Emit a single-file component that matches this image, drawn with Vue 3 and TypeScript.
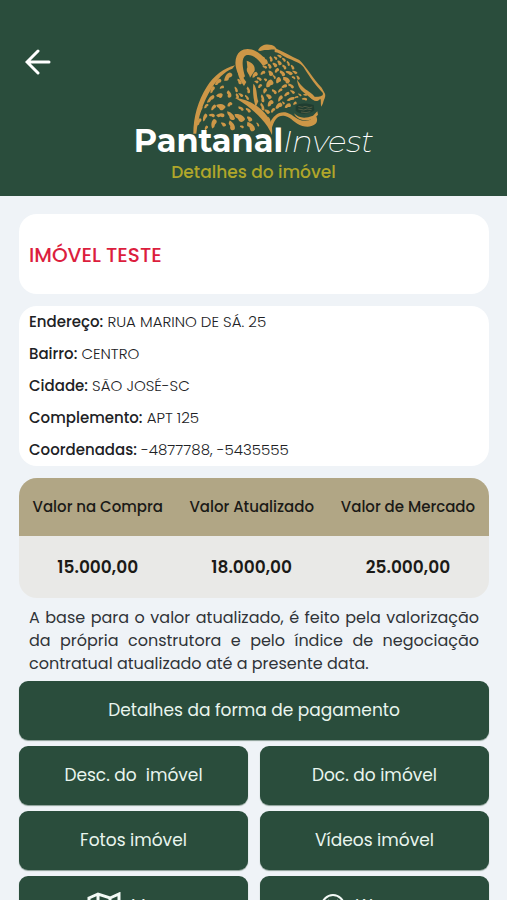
<script setup lang="ts">
interface Entry {
  label: string
  value: string
}

const fields: Entry[] = [
  { label: 'Endereço', value: 'RUA MARINO DE SÁ. 25' },
  { label: 'Bairro', value: 'CENTRO' },
  { label: 'Cidade', value: 'SÃO JOSÉ-SC' },
  { label: 'Complemento', value: 'APT 125' },
  { label: 'Coordenadas', value: '-4877788, -5435555' },
]

const prices: Entry[] = [
  { label: 'Valor na Compra', value: '15.000,00' },
  { label: 'Valor Atualizado', value: '18.000,00' },
  { label: 'Valor de Mercado', value: '25.000,00' },
]

const actions: string[] = ['Desc. do\u00a0 imóvel', 'Doc. do imóvel', 'Fotos imóvel', 'Vídeos imóvel']

// Coat markings: x, y, half length, half width, rotation
const spots: number[][] = [
  [148, 124, 15, 9, -62], [117, 139, 12, 6, -48], [128, 154, 7, 4, -20], [149, 174, 11, 7, 62],
  [100, 162, 11, 5, -62], [121, 178, 9, 7, 18], [95, 190, 15, 6, -52], [76, 180, 8, 4, -65],
  [125, 211, 13, 9, 38], [152, 206, 8, 6, -50], [103, 215, 10, 5, -48], [82, 211, 8, 5, -65],
  [65, 221, 9, 4, -70], [155, 238, 16, 7, 58], [124, 239, 12, 7, -12], [98, 238, 9, 5, 10],
  [77, 245, 12, 5, -62], [60, 259, 12, 5, -68], [104, 264, 14, 7, -70], [133, 264, 8, 5, 50],
  [157, 268, 15, 8, 62], [181, 244, 17, 9, 38], [185, 218, 9, 5, 20], [207, 222, 9, 5, 38],
  [211, 248, 9, 6, 55], [214, 272, 16, 9, 42], [188, 272, 6, 4, 20], [81, 276, 7, 4, -50],
  [174, 180, 8, 5, 65], [171, 160, 9, 4, 70], [185, 176, 8, 4, 45], [203, 184, 9, 4, 50],
  [181, 136, 9, 5, 62], [207, 162, 10, 5, 65], [236, 265, 7, 3, 60],
  [227, 117, 10, 6, -40], [240, 129, 8, 5, 20], [251, 111, 8, 5, -35], [232, 137, 6, 4, 25],
  [243, 151, 7, 5, -60], [271, 144, 13, 9, -45], [257, 165, 8, 5, -55], [250, 187, 12, 5, 75],
  [269, 181, 9, 6, 45], [249, 212, 12, 5, 62], [274, 203, 11, 7, -55], [264, 226, 9, 5, 40],
  [282, 224, 8, 5, -60], [299, 210, 12, 7, -40], [303, 188, 10, 5, -48], [285, 167, 9, 5, 35],
  [303, 164, 8, 4, -38], [297, 133, 9, 7, -38], [321, 132, 12, 8, 35], [315, 151, 9, 5, -18],
  [335, 150, 10, 5, 25], [323, 175, 9, 5, -40], [340, 167, 8, 4, 38], [335, 190, 12, 5, -25],
  [326, 210, 10, 6, -28], [347, 202, 6, 4, -30], [309, 112, 10, 6, 38], [293, 104, 8, 5, -45],
  [275, 111, 9, 6, 70], [271, 90, 8, 5, 55], [287, 86, 8, 5, 48], [275, 69, 8, 5, 60],
  [289, 66, 6, 4, 38], [301, 80, 8, 5, 60], [315, 93, 8, 5, 40], [257, 93, 7, 4, 20],
  [330, 110, 11, 5, 30], [327, 82, 8, 4, 58], [340, 93, 8, 4, 60], [347, 108, 8, 4, 40],
  [314, 71, 7, 4, 40], [301, 60, 7, 4, 32], [261, 76, 7, 4, 60], [252, 66, 6, 4, 35],
  [357, 124, 7, 4, 65], [343, 125, 6, 4, 20], [362, 176, 6, 3, 35], [378, 176, 6, 3, 12],
  [352, 184, 6, 3, -22], [376, 189, 8, 4, 10], [313, 200, 5, 3, 60],
  [270, 250, 8, 3, 70], [259, 131, 5, 4, 40], [285, 123, 6, 4, 40],
]

// Uneven teardrop outline; the index varies its waist and tip
function blotch([x, y, a, b, r]: number[], i: number): { d: string; transform: string } {
  const k = ((i * 37) % 11) / 11
  const tip = Math.round(b * (k - 0.5) * 14) / 10
  const waist = Math.round(b * (0.3 + k * 0.6) * 10) / 10
  const h = Math.round(a * 5) / 10
  return {
    d: `M${-a} ${tip}C${-h} ${-b} ${h} ${-b * 1.4} ${a} ${-waist}C${a + 2} ${b} ${h} ${b * 1.3} 0 ${waist}C${-h} ${waist} ${-h} ${b} ${-a} ${tip}Z`,
    transform: `translate(${x} ${y}) rotate(${r})`,
  }
}
const coat = spots.map(blotch)
</script>

<template>
  <div class="page">
    <header class="header">
      <button class="back" type="button" aria-label="Voltar">
        <svg viewBox="0 0 26 26" aria-hidden="true">
          <path d="M24 13H3M13 2 2 13l11 11" />
        </svg>
      </button>
      <div class="brand">
        <svg class="jaguar" viewBox="0 0 480 315" aria-hidden="true">
          <g class="fur">
            <path d="M43 293C43 243 57 194 83 153C105 118 135 97 168 88L160 98C135 107 115 130 98 157C72 199 58 241 52 293Z" />
            <path d="M189 130C162 99 165 60 184 46C207 29 243 43 267 82L252 90C239 68 216 52 201 58C186 66 190 94 198 121Z" />
            <path d="M203 74C221 79 229 91 227 104L213 125C211 112 199 108 205 94Z" />
            <path d="M237 43C244 27 262 22 278 27C286 29 291 34 294 42C281 38 272 43 258 42C250 41 246 48 237 43Z" />
            <path d="M287 36C312 46 335 61 361 72C383 93 400 126 428 155L438 173C441 184 434 190 432 202L427 212C424 203 427 192 424 188C414 201 402 194 392 183L418 182C429 180 434 177 431 170C411 150 394 126 374 94C365 80 343 74 323 65C309 58 300 50 287 48Z" />
            <path d="M354 130C363 146 371 154 384 163C397 171 409 181 413 193C398 192 389 180 379 173C366 165 356 153 354 130Z" />
            <path d="M272 262C282 240 300 224 324 230C345 236 356 256 379 254C396 253 400 247 408 236C417 246 416 258 408 265C397 274 382 273 370 270C348 264 336 243 318 240C299 236 286 247 277 282Z" />
            <path d="M167 185C206 189 243 210 266 242C278 258 281 274 279 297C272 280 262 264 247 248C226 225 202 205 167 185Z" />
            <path d="M223 143C236 156 231 177 238 196L230 214C222 185 221 165 223 143Z" />
            <path d="M175 99C188 112 192 126 202 138L195 150C184 134 176 119 175 99Z" />
            <path d="M345 232C358 246 377 249 402 239L415 226L417 236C407 248 389 255 371 252C357 249 350 243 345 232Z" />
            <path v-for="(s, i) in coat" :key="i" :d="s.d" :transform="s.transform" />
          </g>
          <path class="mouth" d="M350 211C361 199 386 202 404 207L406 223C393 235 362 237 350 224Z" />
          <path class="whiskers" d="M358 211l12 3 8-3 13 4 9-2M358 219l16 3 11-3 13 2M366 228l15 2 13-3" />
        </svg>
        <div class="wordmark"><b>Pantanal</b><i>Invest</i></div>
      </div>
      <h1 class="subtitle">Detalhes do imóvel</h1>
    </header>

    <main class="content">
      <section class="card title-card">
        <h2>IMÓVEL TESTE</h2>
      </section>

      <section class="card info-card">
        <p v-for="f in fields" :key="f.label"><b>{{ f.label }}:</b> {{ f.value }}</p>
      </section>

      <table class="prices">
        <thead>
          <tr><th v-for="p in prices" :key="p.label" scope="col">{{ p.label }}</th></tr>
        </thead>
        <tbody>
          <tr><td v-for="p in prices" :key="p.label">{{ p.value }}</td></tr>
        </tbody>
      </table>

      <p class="note">
        A base para o valor atualizado, é feito pela valorização da própria construtora e pelo índice de
        negociação contratual atualizado até a presente data.
      </p>

      <div class="actions">
        <button class="action wide" type="button">Detalhes da forma de pagamento</button>
        <button v-for="a in actions" :key="a" class="action" type="button">{{ a }}</button>
        <button class="action with-icon" type="button">
          <svg class="map-icon" viewBox="0 0 34 28" aria-hidden="true">
            <path d="M2 6 11 2l12 4 9-4v20l-9 4-12-4-9 4ZM11 2v20M23 6v20" />
          </svg>
          Mapa
        </button>
        <button class="action with-icon" type="button">
          <svg class="face-icon" viewBox="0 0 26 26" aria-hidden="true">
            <circle cx="13" cy="13" r="11" />
            <path d="M8 7l2 3M18 7l-2 3M8 16c3 4 7 4 10 0" />
          </svg>
          Waze go
        </button>
      </div>
    </main>
  </div>
</template>

<style>
body {
  margin: 0;
  background: #eff3f7;
}
</style>

<style scoped>
.page {
  font-family: Poppins, Inter, "Open Sans", sans-serif;
  color: #202124;
  background: #eff3f7;
}
.header {
  position: relative;
  display: flex;
  flex-direction: column;
  align-items: center;
  padding: 36px 0 13px;
  background: #2a4d3c;
}
.back {
  position: absolute;
  left: 25px;
  top: 49px;
  width: 26px;
  height: 26px;
  padding: 0;
  border: 0;
  background: none;
}
.back svg {
  display: block;
  width: 26px;
  height: 26px;
  fill: none;
  stroke: #fff;
  stroke-width: 3;
  stroke-linecap: round;
}
.brand {
  display: flex;
  flex-direction: column;
  align-items: center;
}
.jaguar {
  width: 160px;
  height: 105px;
  margin-left: 12px;
}
.fur {
  fill: #cd9747;
}
.mouth {
  fill: #203d30;
}
.whiskers {
  fill: none;
  stroke: #68694b;
  stroke-width: 2;
}
.wordmark {
  margin-top: -20px;
  font-family: Montserrat, Poppins, sans-serif;
  font-size: 32px;
  line-height: 40px;
  color: #fff;
  white-space: nowrap;
}
.wordmark b {
  font-weight: 700;
}
.wordmark i {
  font-size: 31px;
  font-weight: 200;
}
.subtitle {
  margin: 0;
  font-size: 17px;
  line-height: 22px;
  font-weight: 500;
  color: #b0a62a;
}
.content {
  display: flex;
  flex-direction: column;
  padding: 18px 18px 12px 19px;
}
.card {
  background: #fff;
  border-radius: 18px;
  padding: 0 10px;
}
.title-card {
  padding-top: 26px;
  padding-bottom: 24px;
  margin-bottom: 12px;
}
.title-card h2 {
  margin: 0;
  font-size: 20px;
  line-height: 30px;
  font-weight: 500;
  color: #dc1e3e;
}
.info-card p {
  margin: 0;
  font-size: 15px;
  line-height: 32px;
  font-weight: 300;
}
.info-card b {
  font-weight: 500;
}
.prices {
  width: 100%;
  margin-top: 12px;
  border-collapse: collapse;
  border-radius: 18px;
  overflow: hidden;
  background: #e9e9e7;
  text-align: center;
  color: #1b1a17;
}
.prices th {
  height: 56px;
  padding: 0 0 2px;
  font-size: 15px;
  font-weight: 500;
  background: #b1a685;
}
.prices td {
  height: 62px;
  padding: 0;
  font-size: 17px;
  font-weight: 600;
}
.note {
  margin: 8px 10px 6px;
  font-size: 16px;
  line-height: 23px;
  text-align: justify;
  color: #303338;
}
.actions {
  display: grid;
  grid-template-columns: 1fr 1fr;
  gap: 6px 12px;
}
.action {
  display: flex;
  align-items: center;
  justify-content: center;
  gap: 10px;
  height: 59px;
  padding: 0 0 2px;
  border: 0;
  border-radius: 9px;
  background: #2a4d3c;
  box-shadow: 0 1px 1px #8a9e95;
  font: inherit;
  font-size: 17px;
  color: #e9f5ee;
}
.wide {
  grid-column: 1 / -1;
}
.with-icon {
  padding: 0;
}
.action svg {
  fill: none;
  stroke: #f3faf6;
  stroke-width: 3;
}
.map-icon {
  width: 34px;
  height: 28px;
}
.action .face-icon {
  width: 26px;
  height: 26px;
  stroke-width: 2;
}
</style>
